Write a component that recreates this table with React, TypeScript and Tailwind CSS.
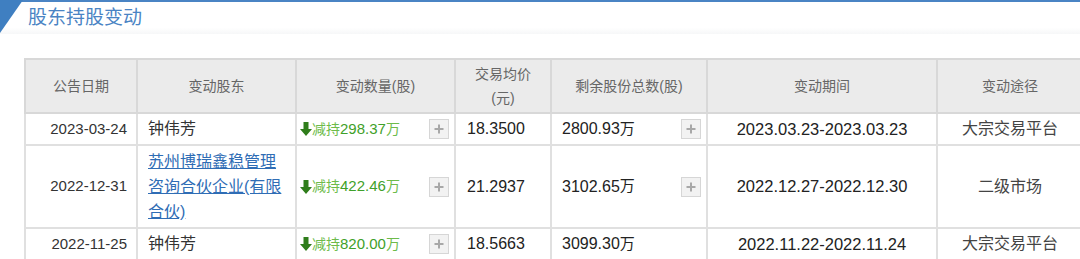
import React from 'react';

const font = { fontFamily: '"Liberation Sans", "Noto Sans CJK SC", sans-serif' };

type Row = {
    date: string;
    holder: string;
    link?: boolean;
    amount: string;
    price: string;
    remain: string;
    period: string;
    route: string;
};

const rows: Row[] = [
    { date: '2023-03-24', holder: '钟伟芳', amount: '298.37', price: '18.3500', remain: '2800.93', period: '2023.03.23-2023.03.23', route: '大宗交易平台' },
    { date: '2022-12-31', holder: '苏州博瑞鑫稳管理咨询合伙企业(有限合伙)', link: true, amount: '422.46', price: '21.2937', remain: '3102.65', period: '2022.12.27-2022.12.30', route: '二级市场' },
    { date: '2022-11-25', holder: '钟伟芳', amount: '820.00', price: '18.5663', remain: '3099.30', period: '2022.11.22-2022.11.24', route: '大宗交易平台' },
];

function PlusBox() {
    return (
        <span className="flex items-center justify-center w-[20px] h-[20px] border border-[#d6d6d6] bg-[#f2f2f2] text-[#a8a8a8] shrink-0">
            <svg width="10" height="10" viewBox="0 0 10 10">
                <path d="M5 0.5v9M0.5 5h9" stroke="#a8a8a8" strokeWidth="2" />
            </svg>
        </span>
    );
}

function DownArrow() {
    return (
        <svg width="12" height="14" viewBox="0 0 12 14" className="shrink-0">
            <path d="M3.5 0h5v7h3.5L6 14 0 7h3.5z" fill="#2f7d1b" />
        </svg>
    );
}

export default function App() {
    return (
        <div className="w-[1080px] h-[259px] overflow-hidden bg-white" style={font}>
            <div className="relative h-[34px] border-t-2 border-[#4a84c4] bg-gradient-to-b from-white from-80% to-[#f6f7f8]">
                <svg width="24" height="34" viewBox="0 0 24 34" className="absolute left-0 top-[-2px]">
                    <path d="M0 0h23L0 33z" fill="#3f7fc1" />
                </svg>
                <div className="pl-[28px] pt-[3px] text-[19px] leading-[26px] text-[#4a84c4]">股东持股变动</div>
            </div>
            <div className="pt-[24px] pl-[24px]">
                <table className="border-collapse table-fixed w-[1058px] text-[16px]">
                    <colgroup>
                        <col className="w-[112px]" />
                        <col className="w-[159px]" />
                        <col className="w-[159px]" />
                        <col className="w-[96px]" />
                        <col className="w-[156px]" />
                        <col className="w-[230px]" />
                        <col className="w-[146px]" />
                    </colgroup>
                    <thead>
                        <tr className="h-[54px] bg-[#ebebeb] text-[14px] text-[#666]">
                            <th className="border-2 border-[#d8d8d8] font-normal">公告日期</th>
                            <th className="border-2 border-[#d8d8d8] font-normal">变动股东</th>
                            <th className="border-2 border-[#d8d8d8] font-normal">变动数量(股)</th>
                            <th className="border-2 border-[#d8d8d8] font-normal leading-[24px]">交易均价<br />(元)</th>
                            <th className="border-2 border-[#d8d8d8] font-normal">剩余股份总数(股)</th>
                            <th className="border-2 border-[#d8d8d8] font-normal">变动期间</th>
                            <th className="border-2 border-[#d8d8d8] font-normal">变动途径</th>
                        </tr>
                    </thead>
                    <tbody>
                        {rows.map((r, i) => (
                            <tr key={i} className={r.link ? 'h-[83px]' : 'h-[32px]'}>
                                <td className="border-2 border-[#e0e0e0] text-right pr-[9px] text-[15px] text-[#333]">{r.date}</td>
                                <td className="border-2 border-[#e0e0e0] pl-[10px] pr-[8px] text-[#333]">
                                    {r.link ? (
                                        <a className="underline text-[#2f6db5] leading-[25px] block">{r.holder}</a>
                                    ) : (
                                        r.holder
                                    )}
                                </td>
                                <td className="border-2 border-[#e0e0e0] pl-[3px] pr-[5px]">
                                    <div className="flex items-center">
                                        <DownArrow />
                                        <span className="text-[14px] text-[#6dbb4a]">减持</span>
                                        <span className="text-[15px] text-[#3fa12a]">{r.amount}</span>
                                        <span className="text-[14px] text-[#6dbb4a]">万</span>
                                        <span className="flex-1" />
                                        <PlusBox />
                                    </div>
                                </td>
                                <td className="border-2 border-[#e0e0e0] pl-[11px] text-[#222]">{r.price}</td>
                                <td className="border-2 border-[#e0e0e0] pl-[10px] pr-[5px] text-[#222]">
                                    <div className="flex items-center">
                                        <span>{r.remain}</span>
                                        <span className="text-[15px]">万</span>
                                        <span className="flex-1" />
                                        {r.link || i === 0 ? <PlusBox /> : null}
                                    </div>
                                </td>
                                <td className="border-2 border-[#e0e0e0] text-center text-[16.5px] text-[#222]">{r.period}</td>
                                <td className="border-2 border-[#e0e0e0] text-center text-[#444]">{r.route}</td>
                            </tr>
                        ))}
                    </tbody>
                </table>
            </div>
        </div>
    );
}
